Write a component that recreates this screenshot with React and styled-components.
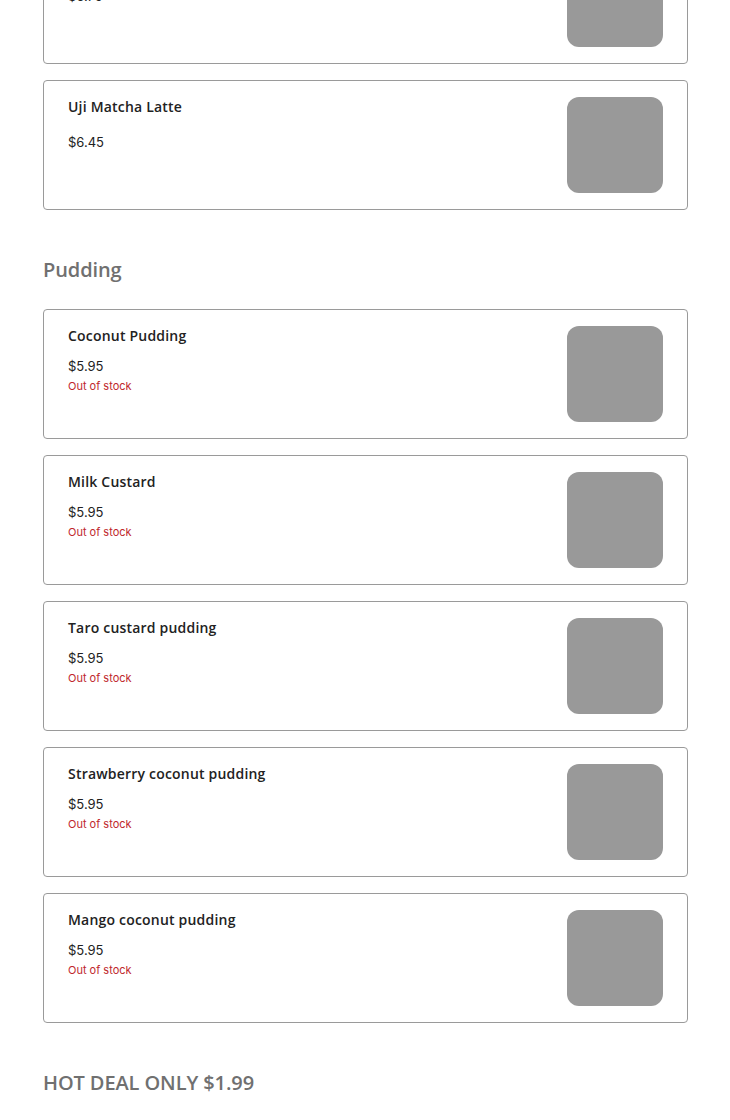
import React from 'react'
import styled, { createGlobalStyle } from 'styled-components'

const GlobalStyle = createGlobalStyle`
  html, body {
    margin: 0;
    padding: 0;
    background: #fff;
  }
  body {
    font-family: "Open Sans", "Liberation Sans", sans-serif;
    color: #222;
  }
`

const Page = styled.div`
  width: 645px;
  margin: -66px 0 0 43px;
  padding-bottom: 40px;
`

const Section = styled.section`
  display: flex;
  flex-direction: column;
`

const Heading = styled.h2`
  margin: 46px 0 25px;
  font-size: 20px;
  line-height: 28px;
  font-weight: 600;
  letter-spacing: -0.1px;
  color: #707070;
`

const List = styled.div`
  display: flex;
  flex-direction: column;
  gap: 16px;
`

const Card = styled.div`
  display: flex;
  justify-content: space-between;
  align-items: flex-start;
  padding: 16px 24px;
  border: 1px solid #9a9a9a;
  border-radius: 4px;
  background: #fff;
`

const Info = styled.div`
  display: flex;
  flex-direction: column;
`

const Name = styled.div`
  font-size: 14px;
  line-height: 20px;
  font-weight: 600;
  letter-spacing: 0.2px;
  color: #222;
`

const Price = styled.div`
  margin-top: ${p => (p.$spaced ? '15px' : '10px')};
  font-family: Inter, "Liberation Sans", sans-serif;
  font-size: 13px;
  line-height: 20px;
  color: #222;
`

const Stock = styled.div`
  margin-top: 2px;
  font-family: Inter, "Liberation Sans", sans-serif;
  font-size: 11px;
  line-height: 16px;
  color: #c0272d;
`

const Thumb = styled.div`
  width: 96px;
  height: 96px;
  flex-shrink: 0;
  border-radius: 12px;
  background: #999;
`

const drinks = [
  { name: 'Hokkaido Milk Tea', price: '$6.75' },
  { name: 'Uji Matcha Latte', price: '$6.45' },
]

const puddings = [
  { name: 'Coconut Pudding', price: '$5.95', out: true },
  { name: 'Milk Custard', price: '$5.95', out: true },
  { name: 'Taro custard pudding', price: '$5.95', out: true },
  { name: 'Strawberry coconut pudding', price: '$5.95', out: true },
  { name: 'Mango coconut pudding', price: '$5.95', out: true },
]

const Item = ({ name, price, out }) =>
  <Card>
    <Info>
      <Name>{name}</Name>
      <Price $spaced={!out}>{price}</Price>
      {out && <Stock>Out of stock</Stock>}
    </Info>
    <Thumb />
  </Card>

export default function App() {
  return (
    <>
      <GlobalStyle />
      <Page>
        <Section>
          <List>
            {drinks.map(d => <Item key={d.name} {...d} />)}
          </List>
        </Section>
        <Section>
          <Heading>Pudding</Heading>
          <List>
            {puddings.map(d => <Item key={d.name} {...d} />)}
          </List>
        </Section>
        <Section>
          <Heading>HOT DEAL ONLY $1.99</Heading>
        </Section>
      </Page>
    </>
  )
}
